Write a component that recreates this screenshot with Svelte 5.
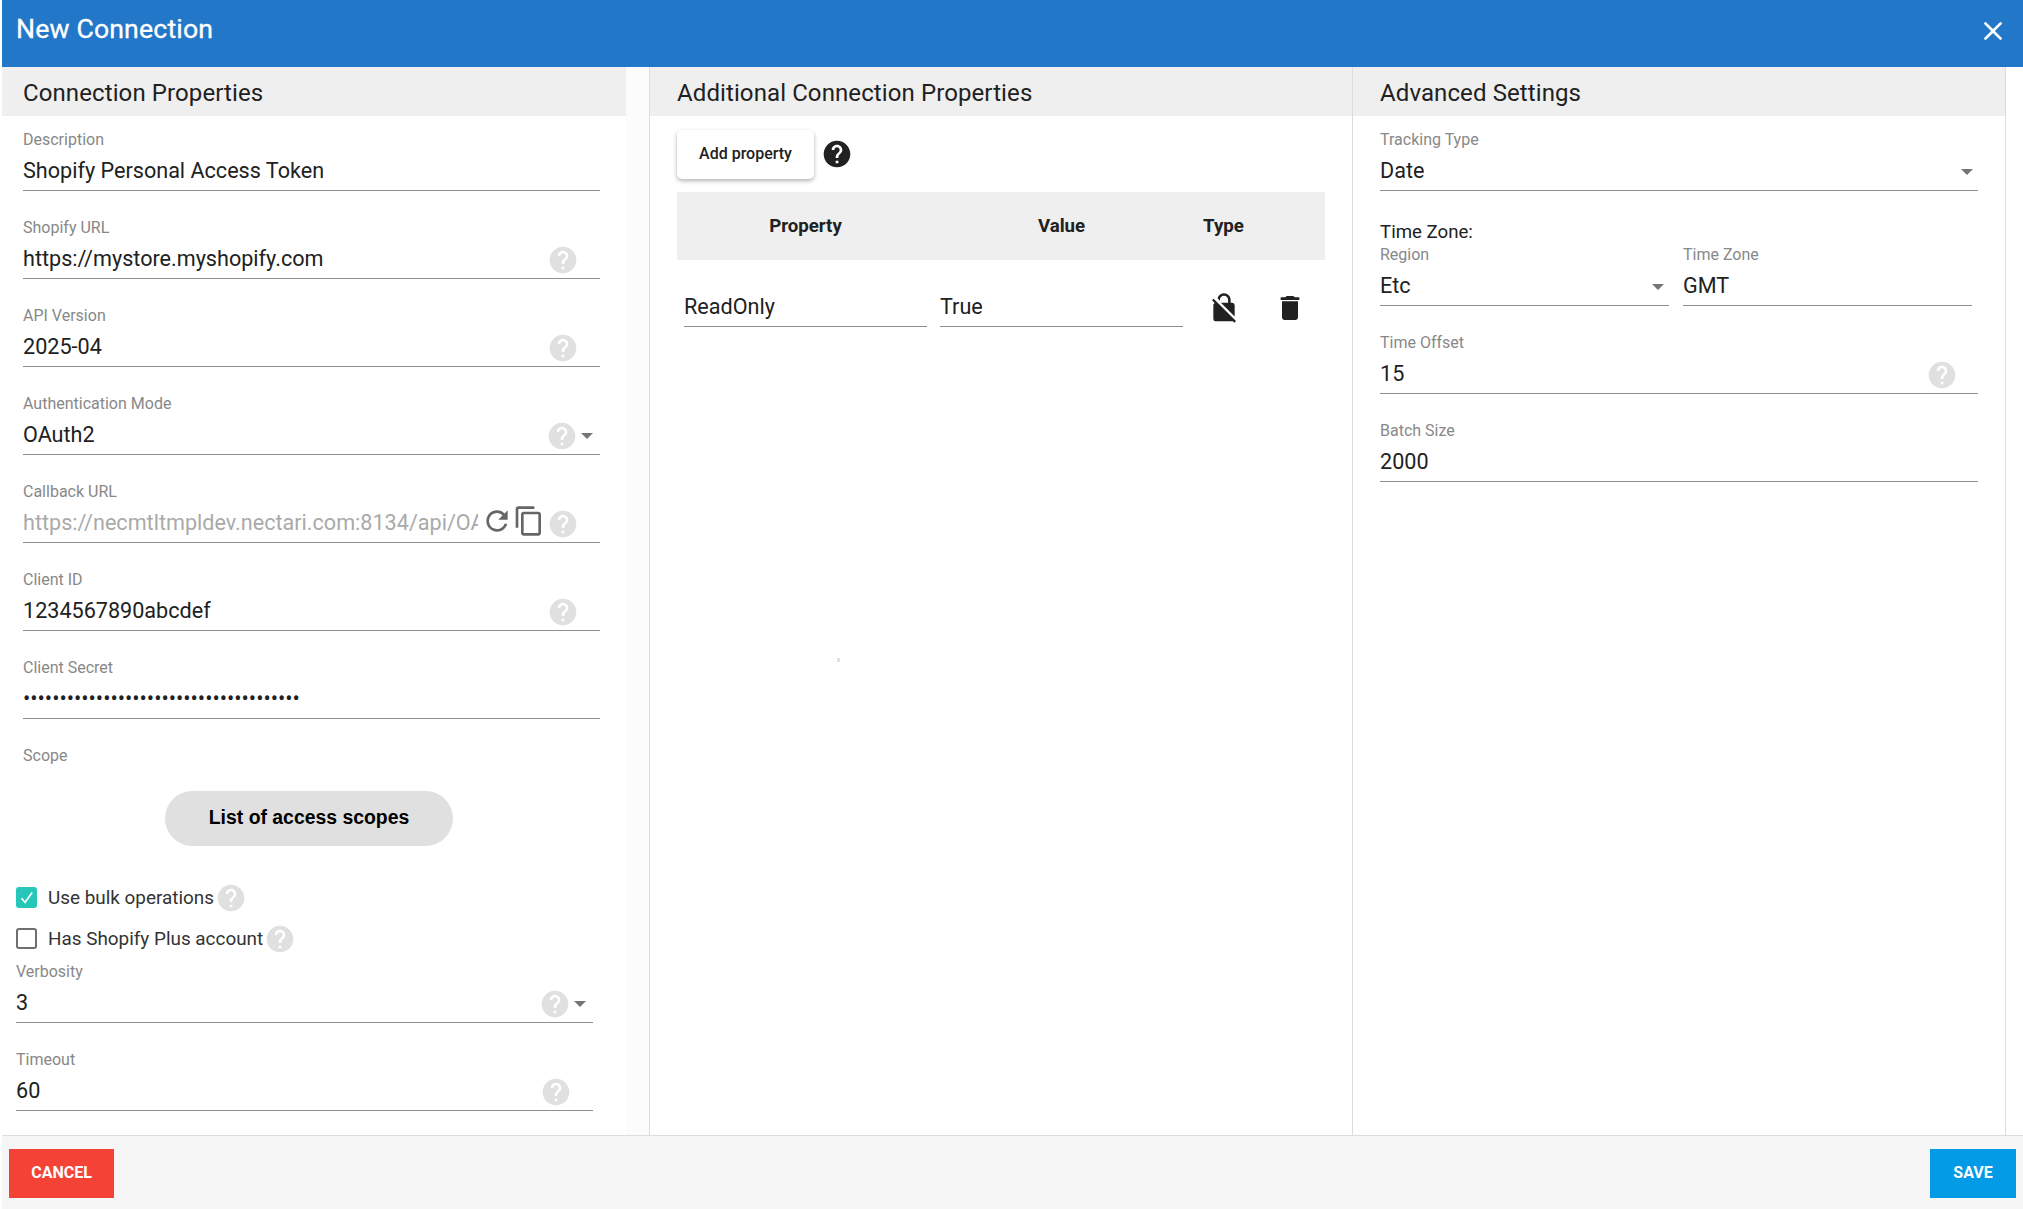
<script>
  const P = {
    help: 'M12 2C6.48 2 2 6.48 2 12s4.48 10 10 10 10-4.48 10-10S17.52 2 12 2zm1 17h-2v-2h2v2zm2.07-7.75l-.9.92C13.45 12.9 13 13.5 13 15h-2v-.5c0-1.1.45-2.1 1.17-2.83l1.24-1.26c.37-.36.59-.86.59-1.41 0-1.1-.9-2-2-2s-2 .9-2 2H8c0-2.21 1.79-4 4-4s4 1.79 4 4c0 .88-.36 1.68-.93 2.25z',
    close: 'M19 6.41L17.59 5 12 10.59 6.41 5 5 6.41 10.59 12 5 17.59 6.41 19 12 13.41 17.59 19 19 17.59 13.41 12z',
    refresh: 'M17.65 6.35C16.2 4.9 14.21 4 12 4c-4.42 0-7.99 3.58-7.99 8s3.57 8 7.99 8c3.73 0 6.84-2.55 7.73-6h-2.08c-.82 2.33-3.04 4-5.65 4-3.31 0-6-2.69-6-6s2.69-6 6-6c1.66 0 3.14.69 4.22 1.78L13 11h7V4l-2.35 2.35z',
    copy: 'M16 1H4c-1.1 0-2 .9-2 2v14h2V3h12V1zm3 4H8c-1.1 0-2 .9-2 2v14c0 1.1.9 2 2 2h11c1.1 0 2-.9 2-2V7c0-1.1-.9-2-2-2zm0 16H8V7h11v14z',
    lock: 'M21 21.78L4.22 5 3 6.22l2.04 2.04C4.42 8.6 4 9.25 4 10v10c0 1.1.9 2 2 2h12c.23 0 .45-.05.66-.12L19.78 23 21 21.78zM8.9 6c0-1.71 1.39-3.1 3.1-3.1s3.1 1.39 3.1 3.1v2H9.66L20 18.34V10c0-1.1-.9-2-2-2h-1V6c0-2.76-2.24-5-5-5-2.32 0-4.26 1.59-4.82 3.74L8.9 6.63V6z',
    trash: 'M6 19c0 1.1.9 2 2 2h8c1.1 0 2-.9 2-2V7H6v12zM19 4h-3.5l-1-1h-5l-1 1H5v2h14V4z'
  };
  const dots = '•'.repeat(38);
</script>

{#snippet icon(d, cls)}
  <svg class={cls} viewBox="0 0 24 24" aria-hidden="true"><path {d} /></svg>
{/snippet}

{#snippet field(label, value, opts = {})}
  <div class="field" class:bleed={opts.bleed}>
    <div class="label">{label}</div>
    <div class="value">
      <span class="text">{value}</span>
      {#if opts.help}{@render icon(P.help, opts.arrow ? 'help near' : 'help')}{/if}
      {#if opts.arrow}<span class="arrow"></span>{/if}
    </div>
  </div>
{/snippet}

<div class="dialog">
  <header class="top">
    <h1>New Connection</h1>
    {@render icon(P.close, 'close')}
  </header>

  <main class="columns">
    <section class="col left">
      <h2>Connection Properties</h2>
      <div class="fields">
        {@render field('Description', 'Shopify Personal Access Token')}
        {@render field('Shopify URL', 'https://mystore.myshopify.com', { help: true })}
        {@render field('API Version', '2025-04', { help: true })}
        {@render field('Authentication Mode', 'OAuth2', { help: true, arrow: true })}
        <div class="field">
          <div class="label">Callback URL</div>
          <div class="value">
            <span class="text muted">https://necmtltmpldev.nectari.com:8134/api/OAuth2/Callback</span>
            {@render icon(P.refresh, 'tool')}
            {@render icon(P.copy, 'tool')}
            {@render icon(P.help, 'help')}
          </div>
        </div>
        {@render field('Client ID', '1234567890abcdef', { help: true })}
        <div class="field">
          <div class="label">Client Secret</div>
          <div class="value"><span class="text dots">{dots}</span></div>
        </div>
        <div class="label">Scope</div>
        <button class="pill">List of access scopes</button>
        <div class="check-row first">
          <span class="box on">
            <svg viewBox="0 0 24 24"><path d="M5 13l5 6L20 5" /></svg>
          </span>
          <span>Use bulk operations</span>
          {@render icon(P.help, 'help inline')}
        </div>
        <div class="check-row">
          <span class="box"></span>
          <span>Has Shopify Plus account</span>
          {@render icon(P.help, 'help inline')}
        </div>
        <div class="tail">
          {@render field('Verbosity', '3', { help: true, arrow: true, bleed: true })}
          {@render field('Timeout', '60', { help: true, bleed: true })}
        </div>
      </div>
    </section>

    <section class="col middle">
      <h2>Additional Connection Properties</h2>
      <div class="pad">
        <div class="actions">
          <button class="add">Add property</button>
          {@render icon(P.help, 'help dark')}
        </div>
        <div class="grid thead">
          <div>Property</div>
          <div>Value</div>
          <div>Type</div>
        </div>
        <div class="grid tbody">
          <div class="value"><span class="text">ReadOnly</span></div>
          <div class="value"><span class="text">True</span></div>
          <div class="cell">{@render icon(P.lock, 'glyph')}</div>
          <div class="cell">{@render icon(P.trash, 'glyph')}</div>
        </div>
      </div>
      <span class="speck"></span>
    </section>

    <section class="col right">
      <h2>Advanced Settings</h2>
      <div class="fields">
        {@render field('Tracking Type', 'Date', { arrow: true })}
        <div class="tz-title">Time Zone:</div>
        <div class="tz">
          {@render field('Region', 'Etc', { arrow: true })}
          {@render field('Time Zone', 'GMT')}
        </div>
        {@render field('Time Offset', '15', { help: true })}
        {@render field('Batch Size', '2000')}
      </div>
    </section>
  </main>

  <footer class="bottom">
    <button class="act cancel">CANCEL</button>
    <button class="act save">SAVE</button>
  </footer>
</div>

<style>
  :global(body) { margin: 0; background: #fff; }
  .dialog {
    width: 2023px; height: 1209px; box-sizing: border-box; padding-left: 2px;
    display: flex; flex-direction: column; overflow: hidden;
    font-family: Roboto, "Liberation Sans", sans-serif; color: #212121;
  }
  .top {
    height: 67px; flex: none; background: #2377c9; color: #fff;
    display: flex; align-items: flex-start; justify-content: space-between;
  }
  h1 { margin: 12px 0 0 14px; font-size: 26.67px; line-height: 34px; font-weight: 400; letter-spacing: .15px; -webkit-text-stroke: .3px #fff; }
  .close { width: 32px; height: 32px; fill: #fff; margin: 15px 14px 0 0; }
  .columns { flex: 1; display: flex; min-height: 0; }
  .col { box-sizing: border-box; }
  .left {
    width: 647px; flex: none;
    background: linear-gradient(90deg, #fff 624px, #fcfcfc 624px);
  }
  .left h2 { width: 624px; padding-left: 21px; }
  .middle { width: 703px; flex: none; border-left: 1px solid #ddd; position: relative; }
  .right { width: 654px; flex: none; border-left: 1px solid #ddd; border-right: 1px solid #ddd; }
  h2 {
    margin: 0; height: 49px; box-sizing: border-box; background: #efefef;
    font-size: 24px; line-height: 53px; font-weight: 400; color: #212121; letter-spacing: .1px;
  }
  .middle h2 { padding-left: 27px; }
  .right h2 { padding-left: 27px; }
  .fields { padding-top: 14px; display: flex; flex-direction: column; }
  .left .fields { padding-left: 21px; width: 577px; }
  .right .fields { padding-left: 27px; width: 598px; }
  .field { display: flex; flex-direction: column; margin-bottom: 27px; min-width: 0; }
  .label { height: 20px; font-size: 16px; line-height: 20px; color: #888; }
  .value {
    display: flex; align-items: center; height: 34px; padding-bottom: 1px;
    border-bottom: 1px solid #8e8e8e; margin-top: 5px; box-sizing: content-box;
    font-size: 21.6px; line-height: 30px;
  }
  .text { flex: 1; min-width: 0; white-space: nowrap; overflow: hidden; margin-bottom: 3px; }
  .muted { color: #aaa; margin-right: 3px; }
  .dots { font-size: 21.6px; line-height: 30px; }
  svg { display: block; flex: none; }
  .help { width: 32px; height: 32px; fill: #e0e0e0; margin-right: 21.5px; }
  .help.near { margin-right: 3px; }
  .right .help { margin-right: 20.5px; }
  .help.inline { margin: 0 0 0 1px; }
  .help.dark { fill: #212121; margin: 0 0 2px 7px; }
  .tool { width: 32px; height: 32px; fill: #666; margin: 0 0 6px 0; }
  .tool + .help { margin-left: 2px; }
  .arrow {
    width: 0; height: 0; flex: none; margin-right: 7px;
    border-left: 6px solid transparent; border-right: 6px solid transparent; border-top: 6px solid #757575;
  }
  .right .arrow { margin-right: 5px; }
  .pill {
    align-self: flex-start; margin: 25px 0 0 142px; width: 288px; height: 55px; border: 0; border-radius: 28px;
    background: #e0e0e0; color: #000; font: 700 19.4px "Liberation Sans", Arial, sans-serif; padding: 0 0 2px;
  }
  .check-row { height: 41px; display: flex; align-items: center; margin-left: -7px; font-size: 18.9px; color: #333; white-space: nowrap; }
  .check-row.first { margin-top: 31px; }
  .box {
    width: 21px; height: 21px; box-sizing: border-box; border: 2px solid #6e6e6e; border-radius: 3px; margin-right: 11px; flex: none;
  }
  .box.on { background: #26c6b9; border: 0; display: flex; align-items: center; justify-content: center; }
  .box svg { width: 17px; height: 17px; fill: none; stroke: #fff; stroke-width: 2.4; }
  .tail { margin-top: 3px; }
  .bleed { margin-left: -7px; margin-right: 7px; }
  .pad { padding-left: 27px; width: 648px; }
  .actions { display: flex; align-items: center; margin-top: 14px; height: 49px; }
  .add {
    width: 137px; height: 49px; background: #fff; border: 0; border-radius: 5px; padding: 0 0 2px;
    box-shadow: 0 2px 4px rgba(0,0,0,.3); font: 500 16px Roboto, sans-serif; color: #212121;
  }
  .grid { display: grid; grid-template-columns: 243px 243px 55px 52px; column-gap: 13px; padding-left: 7px; }
  .thead {
    margin-top: 13px; height: 68px; align-items: center; background: #efefef;
    font-size: 18.67px; font-weight: 700; text-align: center;
  }
  .tbody { margin-top: 31px; align-items: center; }
  .tbody .value { margin-top: 0; }
  .cell { display: flex; justify-content: center; margin-bottom: 3px; }
  .glyph { width: 32px; height: 32px; fill: #212121; }
  .speck { position: absolute; left: 187px; top: 591px; width: 3px; height: 4px; background: #e0e0e0; }
  .tz-title { font-size: 18.67px; line-height: 20px; height: 20px; margin: 4px 0 3px; color: #212121; }
  .tz { display: grid; grid-template-columns: 289px 289px; column-gap: 14px; }
  .bottom {
    height: 74px; flex: none; box-sizing: border-box; background: #f6f6f6; border-top: 1px solid #ddd;
    margin-left: 0; padding: 13px 7px 0 7px; display: flex; justify-content: space-between; align-items: flex-start;
  }
  .act { height: 49px; border: 0; border-radius: 0; color: #fff; font: 700 16px Roboto, sans-serif; padding: 0 0 2px; }
  .cancel { width: 105px; background: #f44336; }
  .save { width: 86px; background: #039be5; }
</style>
